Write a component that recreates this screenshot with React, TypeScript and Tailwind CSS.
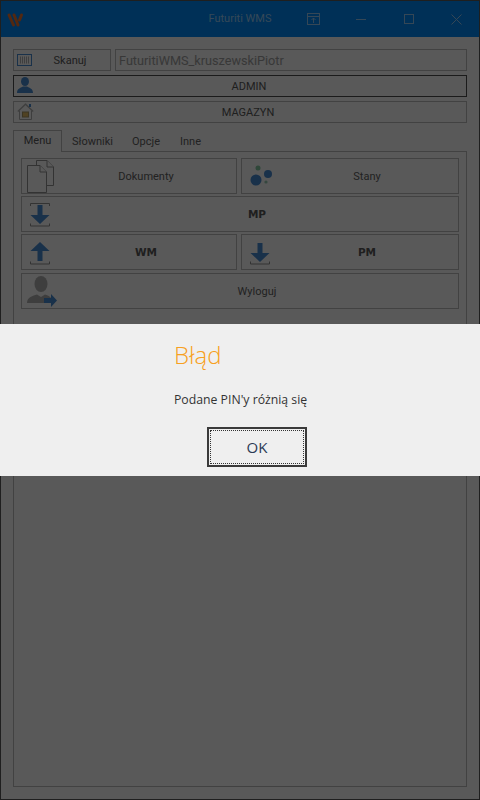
import type { ReactNode } from 'react'

const border = 'border border-[#b4b4b4]'

function BlueArrow({ up = false, topBracket = false }: { up?: boolean; topBracket?: boolean }) {
  return (
    <svg width="22" height="25" viewBox="0 0 22 25" fill="none">
      {topBracket && <path d="M1.5 4V1.5H20.5V4" stroke="#8a8a8a" strokeWidth="1" />}
      <path d="M1.5 21.5V24H20.5V21.5" stroke="#8a8a8a" strokeWidth="1" />
      {up ? (
        <path d="M8.5 21H13.5V11H20.5L11 2L1.5 11H8.5Z" fill="#4585c8" />
      ) : (
        <path d="M8.5 3H13.5V13H20.5L11 22L1.5 13H8.5Z" fill="#4585c8" />
      )}
    </svg>
  )
}

function DocsIcon() {
  return (
    <svg width="28" height="33" viewBox="0 0 28 33" fill="#f0f0f0" stroke="#8a8a8a">
      <path d="M9.5 .5H20L26.5 7V25.5H9.5Z" />
      <path d="M20 .5V7H26.5" />
      <path d="M.5 5.5H13L19.5 12V32.5H.5Z" />
      <path d="M13 5.5V12H19.5" />
    </svg>
  )
}

function DotsIcon() {
  return (
    <svg width="24" height="22" viewBox="0 0 24 22">
      <circle cx="8" cy="3" r="2.5" fill="#7fc09c" />
      <circle cx="6" cy="15" r="5.5" fill="#4585c8" />
      <circle cx="18" cy="9" r="4" fill="#4585c8" />
      <circle cx="16" cy="17" r="1.6" fill="#8fc0aa" />
    </svg>
  )
}

function LogoutIcon() {
  return (
    <svg width="30" height="31" viewBox="0 0 30 31">
      <ellipse cx="14" cy="8" rx="6.5" ry="8" fill="#a8a8a8" />
      <path d="M0 27C0 21 6 20 10 18.5L14 21L18 18.5C21 19.5 23 20.5 24 22V27Z" fill="#a8a8a8" />
      <path d="M17 22H24V18L30 24.5L24 31V27H17Z" fill="#4585c8" />
    </svg>
  )
}

function UserIcon() {
  return (
    <svg width="16" height="16" viewBox="0 0 16 16" fill="#4585c8">
      <ellipse cx="8" cy="4.5" rx="4" ry="4.5" />
      <path d="M0 16C0 11.5 3.5 11 6 9.5H10C12.5 11 16 11.5 16 16Z" />
    </svg>
  )
}

function HomeIcon() {
  return (
    <svg width="17" height="17" viewBox="0 0 17 17" fill="none">
      <path d="M.8 8.5L8.5 1.2L16.2 8.5" stroke="#a8a8a8" strokeWidth="1.2" />
      <path d="M2.5 7.5V16.5H14.5V7.5" stroke="#a8a8a8" />
      <rect x="5.5" y="9" width="6" height="5" fill="#d9b25f" stroke="#a08f60" />
      <rect x="12" y="1" width="2" height="3" fill="#4585c8" />
    </svg>
  )
}

function ScanIcon() {
  return (
    <svg width="15" height="12" viewBox="0 0 15 12" fill="none">
      <rect x=".5" y=".5" width="14" height="11" stroke="#4585c8" />
      <path d="M3.5 2.5V9.5M5.5 2.5V9.5M7.5 2.5V9.5M9.5 2.5V9.5M11.5 2.5V9.5" stroke="#a8a8a8" />
    </svg>
  )
}

function TileButton({ icon, label, bold, className }: { icon: ReactNode; label: string; bold?: boolean; className: string }) {
  return (
    <div className={`relative flex h-[36px] items-center justify-center ${border} bg-[#f0f0f0] pl-[34px] pt-[2px] ${className}`}>
      <span className="absolute left-[5px] top-[1px] flex h-[32px] items-center">{icon}</span>
      <span className={bold ? "font-['DejaVu_Sans'] text-[10.5px] font-bold text-[#555]" : 'text-[11px] text-[#5c5c5c]'}>{label}</span>
    </div>
  )
}

function WideRow({ icon, label, dark, className }: { icon: ReactNode; label: string; dark?: boolean; className?: string }) {
  return (
    <div className={`relative flex h-[22px] items-center justify-center border bg-[#f0f0f0] pt-[2px] text-[11px] text-[#555] ${dark ? 'border-[#4a4a4a] pl-[18px]' : 'border-[#b4b4b4] pl-[16px]'} ${className ?? ''}`}>
      <span className="absolute left-[3px] top-[1px]">{icon}</span>
      {label}
    </div>
  )
}

export default function App() {
  return (
    <div className="relative h-[800px] w-[480px] border border-[#555] bg-[#f0f0f0] font-['Roboto',sans-serif]">
      <header className="relative flex h-[36px] items-center bg-[#0082eb]">
        <svg className="absolute left-[5px] top-[11px]" width="18" height="15" viewBox="0 0 18 15" fill="none" stroke="#e06c2c" strokeWidth="3" strokeLinecap="round">
          <path d="M3 3L7.5 13" />
          <path d="M8 3L12 13" />
          <path d="M15.5 3L13.5 8" />
        </svg>
        <span className="w-full text-center text-[11px] text-[#90c4ee]">Futuriti WMS</span>
        <svg className="absolute left-[306px] top-[12px]" width="14" height="13" viewBox="0 0 14 13" fill="none" stroke="#8fc0e8">
          <rect x=".5" y=".5" width="12" height="11" />
          <path d="M.5 3.5H12.5M6.5 10V5M4.5 7L6.5 5L8.5 7" />
        </svg>
        <div className="absolute left-[355px] top-[18px] h-px w-[10px] bg-[#8fc0e8]" />
        <div className="absolute left-[403px] top-[13px] size-[10px] border border-[#8fc0e8]" />
        <svg className="absolute left-[450px] top-[13px]" width="11" height="11" viewBox="0 0 11 11" stroke="#8fc0e8">
          <path d="M.5 .5L10.5 10.5M10.5 .5L.5 10.5" />
        </svg>
      </header>

      <main className="flex flex-col px-[12px] pt-[12px]">
        <div className="flex gap-[4px]">
          <div className={`relative flex h-[22px] w-[98px] items-center justify-center ${border} pl-[16px] pt-[2px] text-[11px] text-[#555]`}>
            <span className="absolute left-[3px] top-[4px] flex"><ScanIcon /></span>
            Skanuj
          </div>
          <div className={`flex h-[22px] flex-1 items-center ${border} pl-[3px] pt-[1px] text-[12.7px] text-[#999]`}>
            FuturitiWMS_kruszewskiPiotr
          </div>
        </div>
        <WideRow icon={<UserIcon />} label="ADMIN" dark className="mt-[4px]" />
        <WideRow icon={<HomeIcon />} label="MAGAZYN" className="mt-[4px]" />

        <nav className="relative mt-[7px] flex h-[22px] items-end text-[11px] text-[#5c5c5c]">
          <div className="flex h-[22px] w-[49px] items-center justify-center border-x border-t border-[#b4b4b4] bg-[#f0f0f0] text-[#555]">Menu</div>
          <span className="ml-[10px] flex h-[20px] items-center">Słowniki</span>
          <span className="ml-[19px] flex h-[20px] items-center">Opcje</span>
          <span className="ml-[20px] flex h-[20px] items-center">Inne</span>
        </nav>
        <section className={`-mt-px flex h-[636px] flex-col ${border} px-[7px] pt-[6px]`}>
          <div className="flex gap-[4px]">
            <TileButton className="w-[216px]" icon={<DocsIcon />} label="Dokumenty" />
            <TileButton className="flex-1" icon={<span className="ml-[3px] flex"><DotsIcon /></span>} label="Stany" />
          </div>
          <TileButton className="mt-[2px]" icon={<span className="ml-[2px] flex"><BlueArrow topBracket /></span>} label="MP" bold />
          <div className="mt-[2px] flex gap-[4px]">
            <TileButton className="w-[216px]" icon={<span className="ml-[2px] flex"><BlueArrow up /></span>} label="WM" bold />
            <TileButton className="flex-1" icon={<span className="ml-[2px] flex"><BlueArrow /></span>} label="PM" bold />
          </div>
          <TileButton className="mt-[3px]" icon={<LogoutIcon />} label="Wyloguj" />
        </section>
      </main>

      {/* modal dimming + message band */}
      <div className="absolute inset-[-1px] bg-black/[0.63]" />
      <div className="absolute left-[-1px] top-[323px] flex h-[152px] w-[480px] flex-col bg-[#efefef] pl-[174px]">
        <h1 className="mt-[14px] font-['Open_Sans'] text-[24px] font-light leading-[34px] text-[#f7a020]">Błąd</h1>
        <p className="mt-[20px] font-['Open_Sans'] text-[12.25px] leading-[16px] text-[#333]">Podane PIN'y różnią się</p>
        <div className="ml-[33px] mt-[19px] flex h-[40px] w-[100px] items-center justify-center border-[2px] border-[#3a3a3a] font-['Open_Sans'] text-[15px] text-[#2b3a55] outline-1 -outline-offset-4 outline-dotted outline-[#333]">
          OK
        </div>
      </div>
    </div>
  )
}
